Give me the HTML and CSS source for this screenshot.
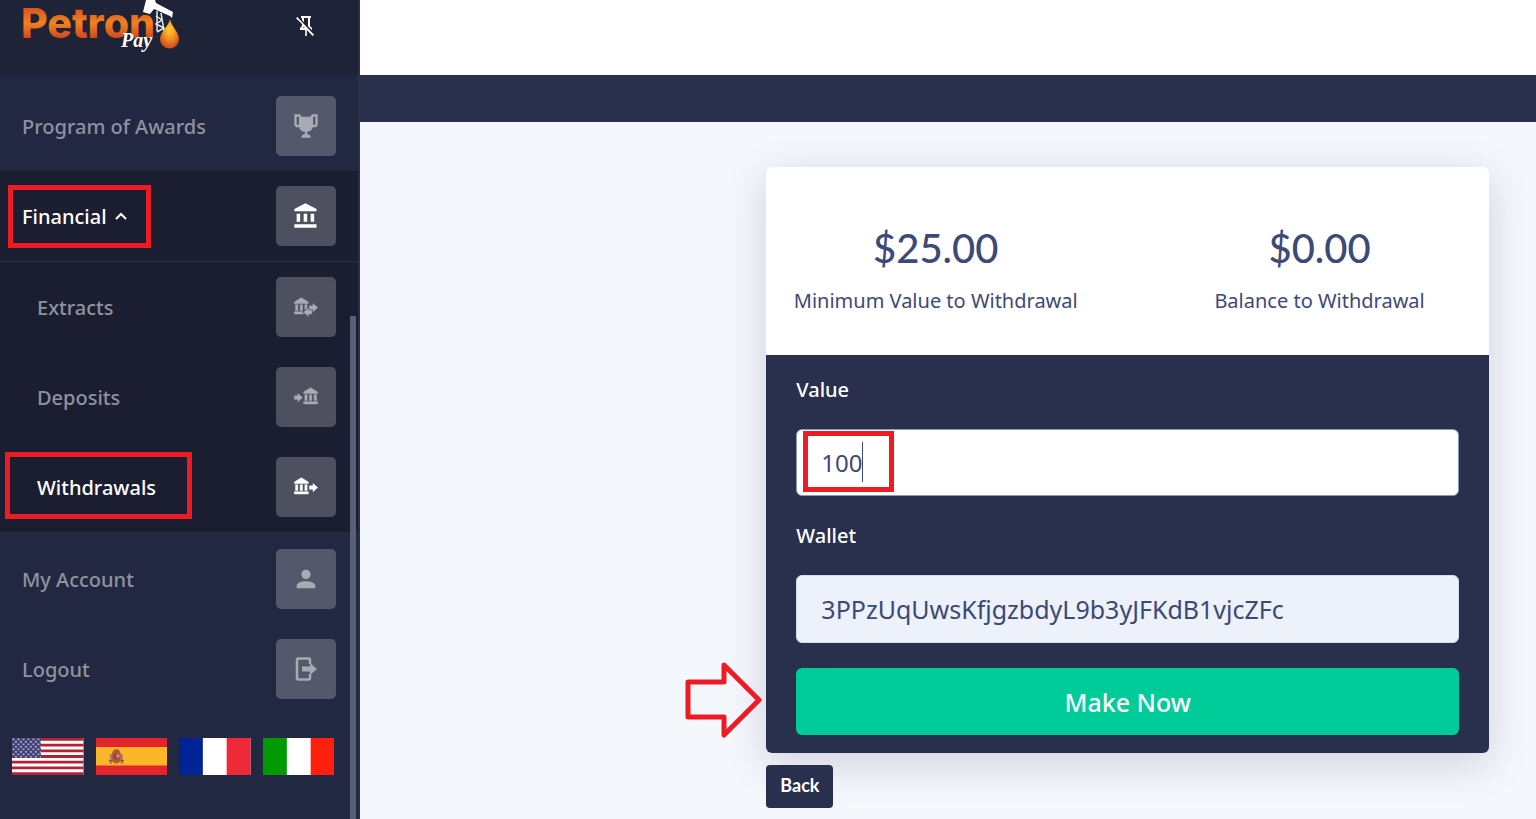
FILE: index.html
```html
<!DOCTYPE html>
<html lang="en">
<head>
    <meta charset="UTF-8">
    <title>Withdrawals</title>
    <link rel="stylesheet" href="styles.css">
</head>
<body>
    <div class="page">
        <aside class="sidebar">
            <header class="sidebar-header">
                <a href="#" class="logo">
                    <svg width="160" height="56" viewBox="0 0 160 56">
                        <defs>
                            <linearGradient id="oil" x1="0" y1="0" x2="0" y2="1">
                                <stop offset="0.2" stop-color="#d8541c"/>
                                <stop offset="0.5" stop-color="#f0831f"/>
                                <stop offset="0.8" stop-color="#cf4a1c"/>
                            </linearGradient>
                            <radialGradient id="drop" cx="0.5" cy="0.35" r="0.65">
                                <stop offset="0" stop-color="#ffd02e"/>
                                <stop offset="0.5" stop-color="#f3921f"/>
                                <stop offset="1" stop-color="#cf4a1c"/>
                            </radialGradient>
                        </defs>
                        <text x="-1" y="38" class="logo-name" fill="url(#oil)">Petron</text>
                        <path d="M124 0h9l1 3 17 9-1 6-2-2-16-7-4 5-7-2z" fill="#fff"/>
                        <path d="M135 11v20M139 13l3 18M134 16l6 4-6 4 8 4-7 4" fill="none" stroke="#e8e8ee" stroke-width="1.500"/>
                        <path d="M148 19c1 7 9 13 9 20a9.500 9.500 0 0 1-19 0c0-7 9-13 10-20z" fill="url(#drop)"/>
                        <text x="99" y="47" class="logo-pay" fill="#fff">Pay</text>
                    </svg>
                </a>
                <button type="button" class="pin" aria-label="Unpin menu">
                    <svg width="24" height="24" viewBox="0 0 24 24"><path d="M8,6.200V4H7V2H17V4H16V12L18,14V16H17.800L14,12.200V4H10V8.200L8,6.200M20,20.700L18.700,22L12.800,16.100V22H11.200V16H6V14L8,12V10.100L2,4.300L3.300,3L20,20.700M8.800,14H10.700L9.700,13.100L8.800,14Z"/></svg>
                </button>
            </header>

            <nav>
                <ul class="menu">
                    <li>
                        <a href="#" class="item">
                            <span class="title">Program of Awards</span>
                            <span class="icon"><svg viewBox="0 0 24 24"><path d="M20.200,2H19.500H18C17.100,2 16,3 16,4H8C8,3 6.900,2 6,2H4.500H3.800H2V11C2,12 3,13 4,13H6.200C6.600,15 7.900,16.700 11,17V19.100C8.800,19.300 8,20.400 8,21.700V22H16V21.700C16,20.400 15.200,19.300 13,19.100V17C16.100,16.700 17.400,15 17.800,13H20C21,13 22,12 22,11V2H20.200M4,11V4H6V6V11C5.100,11 4.300,11 4,11M20,11C19.700,11 18.900,11 18,11V6V4H20V11Z"/></svg></span>
                        </a>
                    </li>
                    <li class="open">
                        <a href="#" class="item active">
                            <span class="title">Financial</span>
                            <svg class="chevron" width="12" height="8" viewBox="0 0 12 8"><path d="M1 7l5-5 5 5" fill="none" stroke="#fff" stroke-width="2"/></svg>
                            <span class="icon"><svg viewBox="0 0 24 24"><path d="M11.500,1L2,6V8H21V6M16,10V17H19V10M2,22H21V19H2M10,10V17H13V10M4,10V17H7V10H4Z"/></svg></span>
                            <span class="mark mark-financial"></span>
                        </a>
                        <ul class="submenu">
                            <li>
                                <a href="#" class="item">
                                    <span class="title">Extracts</span>
                                    <span class="icon"><svg viewBox="0 0 24 24"><path d="M15,14V11H18V9L22,12.500L18,16V14H15M14,7.700V9H2V7.700L8,4L14,7.700M7,10H9V15H7V10M3,10H5V15H3V10M13,10V12.500L11,14.300V10H13M9.100,16L8.500,16.500L10.200,18H2V16H9.100M17,15V18H14V20L10,16.500L14,13V15H17Z"/></svg></span>
                                </a>
                            </li>
                            <li>
                                <a href="#" class="item">
                                    <span class="title">Deposits</span>
                                    <span class="icon"><svg viewBox="0 0 24 24"><path d="M2,11H5V9L9,12.500L5,16V14H2V11M22,7.700V9H10V7.700L16,4L22,7.700M15,10H17V15H15V10M11,10H13V15H11V10M19,10H21V15H19V10M10,16H22V18H10V16Z"/></svg></span>
                                </a>
                            </li>
                            <li>
                                <a href="#" class="item active">
                                    <span class="title">Withdrawals</span>
                                    <span class="icon"><svg viewBox="0 0 24 24"><path d="M15,11H18V9L22,12.500L18,16V14H15V11M14,7.700V9H2V7.700L8,4L14,7.700M7,10H9V15H7V10M3,10H5V15H3V10M11,10H13V15H11V10M2,16H14V18H2V16Z"/></svg></span>
                                    <span class="mark mark-withdrawals"></span>
                                </a>
                            </li>
                        </ul>
                    </li>
                    <li>
                        <a href="#" class="item">
                            <span class="title">My Account</span>
                            <span class="icon"><svg viewBox="0 0 24 24"><path d="M12,4A4,4 0 0,1 16,8A4,4 0 0,1 12,12A4,4 0 0,1 8,8A4,4 0 0,1 12,4M12,14C16.420,14 20,15.790 20,18V20H4V18C4,15.790 7.580,14 12,14Z"/></svg></span>
                        </a>
                    </li>
                    <li>
                        <a href="#" class="item">
                            <span class="title">Logout</span>
                            <span class="icon"><svg viewBox="0 0 28 28"><path d="M18 9V5a1.500 1.500 0 0 0-1.500-1.500h-10A1.500 1.500 0 0 0 5 5v18A1.500 1.500 0 0 0 6.500 24.500h10a1.500 1.500 0 0 0 1.500-1.500V19" fill="none" stroke="currentColor" stroke-width="2.500"/><path d="M10 11.500h8V8l7 6-7 6v-3.500h-8z"/></svg></span>
                        </a>
                    </li>
                </ul>
            </nav>

            <div class="flags">
                <a href="#" aria-label="English">
                    <svg viewBox="0 0 72 37" preserveAspectRatio="none">
                        <defs>
                            <pattern id="stars" width="5" height="5" patternUnits="userSpaceOnUse">
                                <rect width="5" height="5" fill="#3f3f76"/>
                                <rect x="0.500" y="0.500" width="2" height="1.700" fill="#a9a9c6"/>
                                <rect x="3" y="3" width="2" height="1.700" fill="#a9a9c6"/>
                            </pattern>
                        </defs>
                        <rect width="72" height="37" fill="#fff"/>
                        <path d="M0 1.420h72M0 7.110h72M0 12.800h72M0 18.500h72M0 24.190h72M0 29.880h72M0 35.570h72" stroke="#b22234" stroke-width="2.850"/>
                        <rect width="29" height="19.900" fill="url(#stars)"/>
                    </svg>
                </a>
                <a href="#" aria-label="Español">
                    <svg viewBox="0 0 72 37" preserveAspectRatio="none">
                        <rect width="72" height="37" fill="#e3242b"/>
                        <rect y="9" width="72" height="18.500" fill="#fdb52a"/>
                        <path d="M14 16h2v10h-2zM25 16h2v10h-2z" fill="#a3806c"/>
                        <path d="M17 13q3.500-4 7 0l1 3v7q-4.500 5-9 0v-7z" fill="#a5622a"/>
                        <circle cx="20.500" cy="18.500" r="3" fill="#b9343c"/>
                        <circle cx="22" cy="18" r="1.800" fill="#d9899a"/>
                        <path d="M13 22h3v1.500h-3zM25 22h3v1.500h-3z" fill="#c0392b"/>
                    </svg>
                </a>
                <a href="#" aria-label="Français">
                    <svg viewBox="0 0 72 37" preserveAspectRatio="none">
                        <rect width="72" height="37" fill="#fff"/>
                        <rect width="24" height="37" fill="#002395"/>
                        <rect x="48" width="24" height="37" fill="#ed2939"/>
                    </svg>
                </a>
                <a href="#" aria-label="Italiano">
                    <svg viewBox="0 0 72 37" preserveAspectRatio="none">
                        <rect width="72" height="37" fill="#fff"/>
                        <rect width="24" height="37" fill="#009a00"/>
                        <rect x="48" width="24" height="37" fill="#ff1f0d"/>
                    </svg>
                </a>
            </div>
            <div class="scroll-thumb"></div>
        </aside>

        <main>
            <div class="topbar"></div>
            <div class="darkbar"></div>
            <div class="content">
                <div class="card">
                    <div class="totals">
                        <div>
                            <h3>$25.00</h3>
                            <p>Minimum Value to Withdrawal</p>
                        </div>
                        <div>
                            <h3>$0.00</h3>
                            <p>Balance to Withdrawal</p>
                        </div>
                    </div>
                    <form class="withdraw">
                        <label for="value">Value</label>
                        <div class="field">
                            <input type="text" id="value" value="100">
                            <span class="caret"></span>
                            <span class="mark mark-value"></span>
                        </div>
                        <label for="wallet">Wallet</label>
                        <div class="field">
                            <input type="text" id="wallet" value="3PPzUqUwsKfjgzbdyL9b3yJFKdB1vjcZFc" readonly>
                        </div>
                        <button type="button" class="make">Make Now</button>
                    </form>
                    <svg class="arrow" width="78" height="76" viewBox="0 0 78 76"><path d="M3 20h36V3l35 35-35 35V55H3z" fill="none" stroke="#ed1c24" stroke-width="5" stroke-linejoin="round"/></svg>
                </div>
                <button type="button" class="back">Back</button>
            </div>
        </main>
    </div>
</body>
</html>
```

FILE: styles.css
```css
* {
    box-sizing: border-box;
}
body {
    margin: 0;
    font-family: "Noto Sans", sans-serif;
    font-size: 20px;
    line-height: 30px;
    color: #3d4977;
    background: #f4f7fc;
}
button, input {
    font-family: inherit;
}
ul {
    list-style: none;
    margin: 0;
    padding: 0;
}
.page {
    display: flex;
    min-height: 100vh;
}

/* sidebar */
.sidebar {
    position: relative;
    flex: none;
    width: 360px;
    background: #222841;
    border-right: 2px solid #2a2f48;
}
.sidebar-header {
    display: flex;
    justify-content: space-between;
    height: 75px;
    padding: 0 40px 0 22px;
    background: #1e2337;
}
.logo svg {
    display: block;
}
.logo-name {
    font: 800 41px Inter, sans-serif;
}
.logo-pay {
    font: italic bold 20px "Liberation Serif", serif;
}
.pin {
    align-self: flex-start;
    margin-top: 14px;
    padding: 0;
    border: none;
    background: none;
    cursor: pointer;
}
.pin svg {
    display: block;
    fill: #fff;
}
.menu {
    padding-top: 6px;
}
.item {
    position: relative;
    display: flex;
    align-items: center;
    height: 90px;
    padding: 0 22px;
    color: #8f929f;
    font-weight: 500;
    text-decoration: none;
}
.item .title {
    padding-top: 2px;
}
.item .icon {
    display: flex;
    align-items: center;
    justify-content: center;
    width: 60px;
    height: 60px;
    margin-left: auto;
    border-radius: 5px;
    background: #54586b;
    color: #a8aab4;
}
.icon svg {
    width: 28px;
    height: 28px;
    fill: currentColor;
}
.item.active, .item.active .icon {
    color: #fff;
}
.open {
    background: #1b1e30;
    border-bottom: 2px solid #262b3c;
}
.open .icon {
    background: #4e5060;
}
.submenu {
    border-top: 1px solid #2b2f42;
}
.submenu .item {
    padding-left: 37px;
}
.submenu svg {
    stroke: currentColor;
    stroke-width: 0.4px;
}
.chevron {
    margin-left: 8px;
}
.flags {
    display: flex;
    gap: 12px;
    padding: 24px 24px 24px 12px;
}
.flags a {
    flex: 1;
}
.flags svg {
    display: block;
    width: 100%;
    height: 37px;
}
.scroll-thumb {
    position: absolute;
    top: 316px;
    right: 2px;
    bottom: 0;
    width: 6px;
    background: #5a5f74;
}

/* red highlights */
.mark {
    position: absolute;
    border: 5px solid #ed1c24;
}
.mark-financial {
    left: 8px;
    top: 14px;
    width: 143px;
    height: 63px;
}
.mark-withdrawals {
    left: 5px;
    top: 10px;
    width: 187px;
    height: 67px;
}
.mark-value {
    left: 7px;
    top: 2px;
    width: 91px;
    height: 61px;
}
.arrow {
    position: absolute;
    right: 100%;
    bottom: 15px;
    margin-right: 3px;
}

/* content */
main {
    flex: 1;
    min-width: 0;
}
.topbar {
    height: 75px;
    background: #fff;
}
.darkbar {
    height: 47px;
    background: #29304d;
}
.content {
    padding: 45px 47px 11px 45px;
}
.card, .back {
    margin-left: 33.333%;
}
.card {
    position: relative;
    border-radius: 6px;
    background: #fff;
    box-shadow: 0 10px 40px rgba(41, 48, 77, 0.18);
}
.totals {
    display: grid;
    grid-template-columns: 1fr 1fr;
    gap: 45px;
    height: 188px;
    padding-top: 56px;
    text-align: center;
}
.totals h3 {
    margin: 0 0 13px;
    font: 500 40px/50px Lato, sans-serif;
}
.totals p {
    margin: 0;
}
.withdraw {
    padding: 20px 30px 18px;
    border-radius: 0 0 6px 6px;
    background: #29304d;
}
.withdraw label {
    display: block;
    margin-bottom: 24px;
    color: #fff;
    font-weight: 500;
}
.field {
    position: relative;
    margin-bottom: 25px;
}
.field input {
    display: block;
    width: 100%;
    height: 67px;
    padding: 0 24px;
    border: 1px solid #8798bf;
    border-radius: 6px;
    background: #fff;
    color: #3d4977;
    font-size: 24px;
}
.field input[readonly] {
    height: 68px;
    border-color: #d5dcea;
    background: #edf1f9;
    font-size: 25px;
}
.caret {
    position: absolute;
    left: 66px;
    top: 13px;
    width: 1px;
    height: 40px;
    background: #3d4977;
}
.make {
    display: block;
    width: 100%;
    height: 67px;
    border: none;
    border-radius: 6px;
    background: #00cc99;
    color: #fff;
    font-size: 25px;
    font-weight: 500;
    cursor: pointer;
}
.back {
    display: block;
    position: relative;
    height: 43px;
    margin-top: 12px;
    padding: 0 14px 4px;
    border: none;
    border-radius: 4px;
    background: #29304d;
    color: #fff;
    font: bold 18px Lato, sans-serif;
    cursor: pointer;
}
```
